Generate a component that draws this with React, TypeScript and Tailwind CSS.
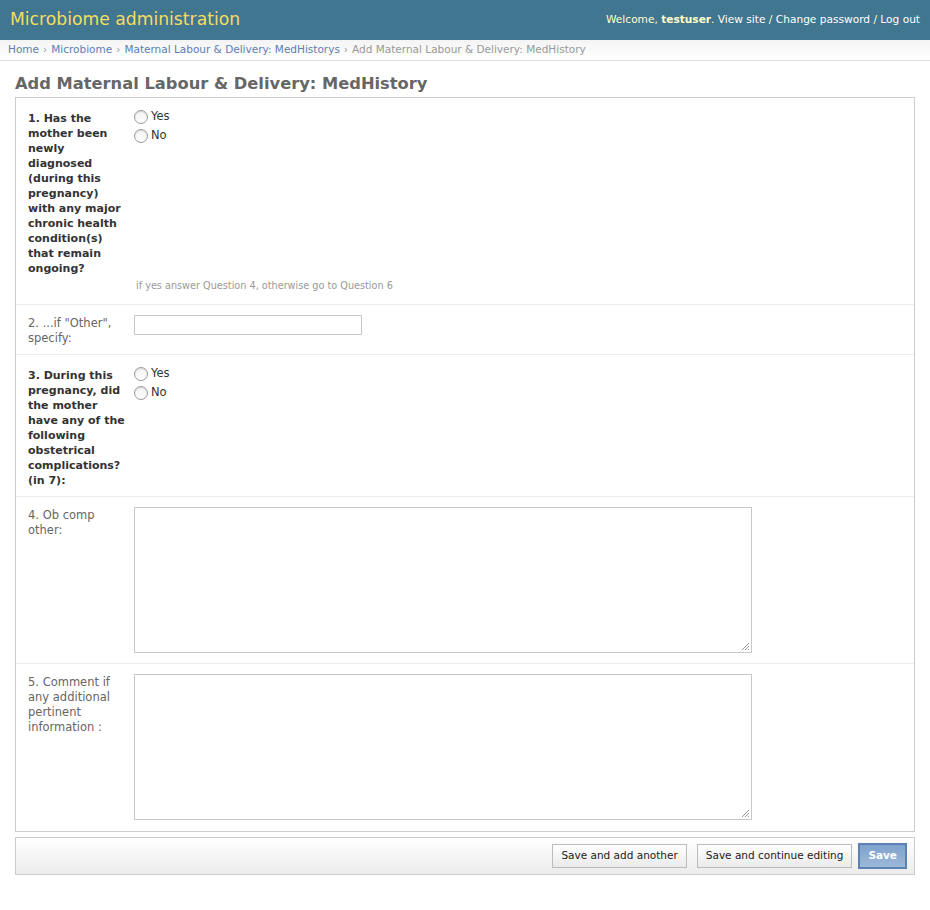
import React from "react";

function Radio({ label }: { label: string }) {
  return (
    <label className="flex items-center h-[19px] text-[11.5px] text-[#333]">
      <span className="w-[14px] h-[14px] rounded-full border border-[#9a9a9a] bg-gradient-to-b from-[#f4f4f4] to-[#fdfdfd] shadow-[inset_0_1px_1px_rgba(0,0,0,0.12)]" />
      <span className="ml-[3px]">{label}</span>
    </label>
  );
}

function Textarea() {
  return (
    <div className="relative w-[618px] h-[146px] border border-[#c8c8c8] bg-white">
      <svg className="absolute right-[1px] bottom-[1px]" width="11" height="11" viewBox="0 0 11 11">
        <path d="M10 3 L3 10 M10 6 L6 10 M10 9 L9 10" stroke="#9a9a9a" strokeWidth="1" />
      </svg>
    </div>
  );
}

export default function App() {
  return (
    <div className="min-h-[910px] bg-white text-[11.5px] text-[#333]" style={{ fontFamily: '"DejaVu Sans", "Lucida Grande", Verdana, sans-serif' }}>
      {/* Header */}
      <header className="h-[40px] bg-[#417690] flex items-center justify-between pl-[10px] pr-[10px]">
        <h1 className="text-[17.2px] text-[#f5dd5d] font-normal">Microbiome administration</h1>
        <div className="text-[10.6px] text-[#ffc]">
          Welcome, <strong className="font-bold">testuser</strong>.{" "}
          <span className="text-white">View site</span> / <span className="text-white">Change password</span> /{" "}
          <span className="text-white">Log out</span>
        </div>
      </header>

      {/* Breadcrumbs */}
      <div className="h-[21px] border-b border-[#ddd] bg-gradient-to-b from-[#f4f4f4] to-white flex items-center px-[8px] text-[10.5px] text-[#999]">
        <span className="text-[#5b80b2]">Home</span>
        <span className="mx-[4px]">›</span>
        <span className="text-[#5b80b2]">Microbiome</span>
        <span className="mx-[4px]">›</span>
        <span className="text-[#5b80b2]">Maternal Labour &amp; Delivery: MedHistorys</span>
        <span className="mx-[4px]">›</span>
        <span>Add Maternal Labour &amp; Delivery: MedHistory</span>
      </div>

      {/* Content */}
      <div className="px-[15px] pt-[11px]">
        <h1 className="text-[16.3px] font-bold text-[#666] leading-[24px] mb-[1px]">Add Maternal Labour &amp; Delivery: MedHistory</h1>

        <div className="border border-[#ccc]">
          {/* Row 1 */}
          <div className="flex pl-[12px] pt-[13px] pb-[12px] border-b border-[#eee] h-[207px]">
            <div className="w-[106px] shrink-0 pr-[8px] font-bold text-[11px] leading-[15px] text-[#333]">
              1. Has the mother been newly diagnosed (during this pregnancy) with any major chronic health condition(s) that remain ongoing?
            </div>
            <div className="flex flex-col flex-1 mt-[-4px]">
              <Radio label="Yes" />
              <Radio label="No" />
              <p className="mt-auto ml-[2px] text-[9.7px] text-[#999] leading-[13px]">if yes answer Question 4, otherwise go to Question 6</p>
            </div>
          </div>

          {/* Row 2 */}
          <div className="flex pl-[12px] pt-[10px] border-b border-[#eee] h-[50px]">
            <div className="w-[106px] shrink-0 pr-[8px] leading-[15px] text-[#666] pt-[1px]">2. ...if "Other", specify:</div>
            <div className="w-[228px] h-[20px] border border-[#c8c8c8] bg-white" />
          </div>

          {/* Row 3 */}
          <div className="flex pl-[12px] pt-[13px] border-b border-[#eee] h-[142px]">
            <div className="w-[106px] shrink-0 pr-[8px] font-bold text-[11px] leading-[15px] text-[#333]">
              3. During this pregnancy, did the mother have any of the following obstetrical complications? (in 7):
            </div>
            <div className="flex flex-col mt-[-4px]">
              <Radio label="Yes" />
              <Radio label="No" />
            </div>
          </div>

          {/* Row 4 */}
          <div className="flex pl-[12px] pt-[10px] border-b border-[#eee] h-[167px]">
            <div className="w-[106px] shrink-0 pr-[8px] leading-[15px] text-[#666] pt-[1px]">4. Ob comp other:</div>
            <Textarea />
          </div>

          {/* Row 5 */}
          <div className="flex pl-[12px] pt-[10px] h-[167px]">
            <div className="w-[106px] shrink-0 pr-[8px] leading-[15px] text-[#666] pt-[1px]">
              5. Comment if any additional pertinent information :
            </div>
            <Textarea />
          </div>
        </div>

        {/* Submit row */}
        <div className="mt-[5px] h-[38px] border border-[#ccc] bg-gradient-to-b from-white to-[#ececec] flex items-center justify-end gap-[10px] pr-[7px]">
          <button className="h-[24px] px-[8px] border border-[#bbb] bg-gradient-to-b from-white to-[#eaeaea] text-[10.5px] text-[#222]">
            Save and add another
          </button>
          <div className="flex items-center gap-[6px]">
            <button className="h-[24px] px-[8px] border border-[#bbb] bg-gradient-to-b from-white to-[#eaeaea] text-[10.5px] text-[#222]">
              Save and continue editing
            </button>
            <button className="h-[26px] px-[8px] border-2 border-[#5b80b2] bg-gradient-to-b from-[#7fa2cc] to-[#9db8da] text-[10.5px] font-bold text-white">
              Save
            </button>
          </div>
        </div>
      </div>
    </div>
  );
}
